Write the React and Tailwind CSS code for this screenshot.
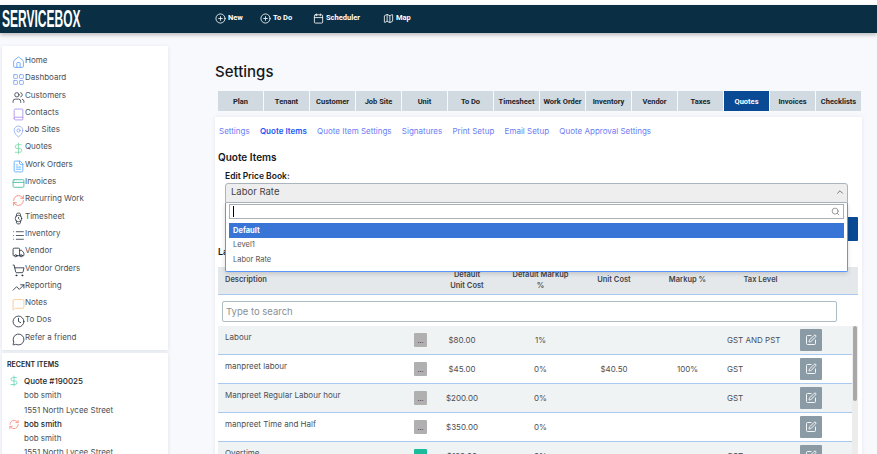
import React from "react";
import { Home, LayoutGrid, Users, Book, MapPin, DollarSign, FileText, CreditCard, RefreshCw, Watch, List, Truck, ShoppingCart, TrendingUp, MessageSquare, Clock, MessageCircle, CirclePlus, Calendar, Map as MapIcon, SquarePen, Search, ChevronUp } from "lucide-react";

const menu = [
  ["Home", Home, "text-[#5b9df5]"],
  ["Dashboard", LayoutGrid, "text-[#7aa0f0]"],
  ["Customers", Users, "text-[#333a45]"],
  ["Contacts", Book, "text-[#a98be8]"],
  ["Job Sites", MapPin, "text-[#8ea8f0]"],
  ["Quotes", DollarSign, "text-[#7dd8a8]"],
  ["Work Orders", FileText, "text-[#4da6ff]"],
  ["Invoices", CreditCard, "text-[#35b89a]"],
  ["Recurring Work", RefreshCw, "text-[#f87c6c]"],
  ["Timesheet", Watch, "text-[#333a45]"],
  ["Inventory", List, "text-[#333a45]"],
  ["Vendor", Truck, "text-[#1f2937]"],
  ["Vendor Orders", ShoppingCart, "text-[#1f2937]"],
  ["Reporting", TrendingUp, "text-[#1f2937]"],
  ["Notes", MessageSquare, "text-[#f9c37a]"],
  ["To Dos", Clock, "text-[#1f2937]"],
  ["Refer a friend", MessageCircle, "text-[#1f2937]"],
];

const tabs = ["Plan", "Tenant", "Customer", "Job Site", "Unit", "To Do", "Timesheet", "Work Order", "Inventory", "Vendor", "Taxes", "Quotes", "Invoices", "Checklists"];
const sub = ["Settings", "Quote Items", "Quote Item Settings", "Signatures", "Print Setup", "Email Setup", "Quote Approval Settings"];

const rows = [
  ["Labour", "$80.00", "1%", "", "", "GST AND PST", false],
  ["manpreet labour", "$45.00", "0%", "$40.50", "100%", "GST", false],
  ["Manpreet Regular Labour hour", "$200.00", "0%", "", "", "GST", false],
  ["manpreet Time and Half", "$350.00", "0%", "", "", "", false],
  ["Overtime", "$120.00", "0%", "", "", "GST", true],
];

function NavItem({ icon: Icon, label, className }) {
  return (
    <div className={"flex items-center gap-[2px] " + className}>
      <Icon size={11} strokeWidth={1.8} />
      <span className="mb-[1px]">{label}</span>
    </div>
  );
}

export default function App() {
  return (
    <div className="h-[454px] w-[877px] overflow-hidden bg-[#f8f9fc] font-['Inter','Liberation_Sans',sans-serif] text-[8px] text-[#4a4f57]">
      <div className="h-[5px] bg-white" />
      <header className="relative z-10 flex h-[28px] items-center bg-[#0a2f44] text-white shadow-[0_2px_4px_rgba(0,0,0,0.25)]">
        <div className="w-[215px] pl-[2px]">
          <span className="inline-block origin-left scale-x-[0.5] font-['Liberation_Sans',sans-serif] text-[24px] leading-none font-bold whitespace-nowrap">SERVICEBOX</span>
        </div>
        <div className="mb-[1px] flex items-center font-['Roboto',sans-serif] text-[7.5px] font-bold">
          <NavItem icon={CirclePlus} label="New" className="w-[45px]" />
          <NavItem icon={CirclePlus} label="To Do" className="w-[53px]" />
          <NavItem icon={Calendar} label="Scheduler" className="w-[70px]" />
          <NavItem icon={MapIcon} label="Map" className="" />
        </div>
      </header>

      <div className="flex">
        <aside className="ml-[2px] w-[166px] shrink-0">
          <nav className="mt-[13px] h-[304px] bg-white pt-[7px] pl-[10px] shadow-[0_1px_4px_rgba(120,130,170,0.2)]">
            {menu.map(([label, Icon, color]) => (
              <div key={label} className="flex h-[17.3px] items-start">
                <Icon size={13} strokeWidth={1.5} className={"mt-[3px] w-[13px] shrink-0 " + color} />
                <span className="text-[8px] leading-[14px] whitespace-nowrap">{label}</span>
              </div>
            ))}
          </nav>
          <section className="mt-[3px] h-[110px] bg-white pt-[7px] pl-[5px] shadow-[0_1px_4px_rgba(120,130,170,0.2)]">
            <div className="text-[7px] leading-[10px] font-semibold text-[#22262b]">RECENT ITEMS</div>
            <div className="mt-[4px] leading-[14.3px] text-[#4a4f57]">
              <div className="flex items-center text-[#22262b]">
                <DollarSign size={12} strokeWidth={1.6} className="w-[17px] pr-[3px] text-[#5fd8b8]" />
                <span className="font-medium">Quote #190025</span>
              </div>
              <div className="pl-[17px]">bob smith</div>
              <div className="pl-[17px]">1551 North Lycee Street</div>
              <div className="flex items-center text-[#22262b]">
                <RefreshCw size={11} strokeWidth={1.6} className="w-[17px] pr-[3px] text-[#f87c6c]" />
                <span className="font-medium">bob smith</span>
              </div>
              <div className="pl-[17px]">bob smith</div>
              <div className="pl-[17px]">1551 North Lycee Street</div>
            </div>
          </section>
        </aside>

        <main className="ml-[47px] w-[647px] shrink-0">
          <h1 className="mt-[29px] text-[15px] leading-[20px] font-medium text-[#15181c]">Settings</h1>
          <div className="mt-[9px] ml-[3px] flex font-['Roboto',sans-serif] text-[7.5px] font-bold text-[#20252b]">
            {tabs.map((t) => (
              <div key={t} className={"mr-[1px] flex h-[20px] w-[45px] items-center justify-center pt-[1px] whitespace-nowrap " + (t === "Quotes" ? "bg-[#0a4a94] text-white" : "bg-[#d2dae1]")}>{t}</div>
            ))}
          </div>

          <div className="mt-[6px] h-[340px] bg-white shadow-[0_0_4px_rgba(120,130,170,0.15)]">
            <div className="flex gap-[10.3px] pt-[8px] pl-[4px] text-[8px] leading-[12px] text-[#6b7df5]">
              {sub.map((s) => (
                <span key={s} className={s === "Quote Items" ? "font-semibold text-[#1a56f0]" : ""}>{s}</span>
              ))}
            </div>
            <div className="mt-[13px] pl-[3px] text-[10px] leading-[14px] font-semibold text-[#15181c]">Quote Items</div>
            <div className="mt-[6px] pl-[10px] text-[8.5px] leading-[12px] font-semibold text-[#15181c]">Edit Price Book:</div>

            <div className="relative z-20 mt-[1px] ml-[10px] w-[623px]">
              <div className="flex h-[20px] items-center justify-between rounded-t-[3px] border border-[#aab4bd] bg-[#eeeeee] pr-[2px] pb-[2px] pl-[5px] text-[9.5px] text-[#444]">
                <span>Labor Rate</span>
                <ChevronUp size={10} strokeWidth={2.4} className="text-[#777]" />
              </div>
              <div className="absolute top-full left-0 h-[69px] w-full rounded-b-[2px] border border-t-0 border-[#5897fb] bg-white px-[3px] pt-[1px] shadow-[0_2px_4px_rgba(0,0,0,0.15)]">
                <div className="flex h-[15px] items-center justify-between border border-[#aab0b6] pr-[3px] pl-[3px]">
                  <span className="h-[11px] w-[1px] bg-black" />
                  <Search size={9} strokeWidth={2.2} className="text-[#888]" />
                </div>
                <div className="mt-[4px] flex h-[15px] items-center bg-[#3875d7] pl-[4px] text-[7.5px] font-bold text-white">Default</div>
                <div className="flex h-[15px] items-center pb-[2px] pl-[4px] text-[7.5px] text-[#555]">Level1</div>
                <div className="flex h-[15px] items-center pb-[2px] pl-[4px] text-[7.5px] text-[#555]">Labor Rate</div>
              </div>
            </div>

            <div className="mt-[14px] flex justify-end pr-[4px]">
              <div className="h-[24px] w-[60px] rounded-[1px] bg-[#0a4a94]" />
            </div>
            <div className="mt-[5px] mb-[9px] pl-[3px] text-[9px] leading-[12px] font-semibold text-[#15181c]">Labor Rate</div>

            <div className="ml-[3px] w-[640px]">
              <div className="flex h-[28px] items-center border-b border-[#a9c9f0] bg-[#e5e8eb] pb-[2px] text-center text-[7.5px] leading-[11px] font-semibold text-[#40454c]">
                <div className="w-[212px] pl-[7px] text-left">Description</div>
                <div className="w-[74px]">Default<br />Unit Cost</div>
                <div className="w-[73px]">Default Markup<br />%</div>
                <div className="w-[74px]">Unit Cost</div>
                <div className="w-[73px]">Markup %</div>
                <div className="w-[73px]">Tax Level</div>
              </div>
              <div className="pt-[6px] pr-[21px] pb-[4px] pl-[4px]">
                <input readOnly placeholder="Type to search" className="h-[21px] w-full rounded-[2px] border border-[#aebcc6] bg-white pl-[3px] text-[9.5px] placeholder:text-[#8a8f95]" />
              </div>
              <div className="relative h-[200px] overflow-hidden pr-[6px]">
                {rows.map(([d, uc, mk, c2, m2, tax, green], i) => (
                  <div key={d} className={"flex h-[29px] items-center border-b border-[#a9c9f0] text-[8px] " + (i % 2 === 0 ? "bg-[#f0f3f4]" : "bg-white")}>
                    <div className="mb-[6px] w-[186px] pl-[7px] whitespace-nowrap">{d}</div>
                    <div className="w-[33px] pl-[10px]">
                      <div className={"flex h-[14px] w-[13px] items-center justify-center rounded-[1px] text-[7px] leading-none text-[#333] " + (green ? "bg-[#1abc9c]" : "bg-[#b0b0b0]")}>...</div>
                    </div>
                    <div className="mb-[1px] w-[50px] text-center">{uc}</div>
                    <div className="mb-[1px] ml-[17px] w-[73px] text-center">{mk}</div>
                    <div className="mb-[1px] w-[74px] text-center">{c2}</div>
                    <div className="mb-[1px] w-[73px] text-center">{m2}</div>
                    <div className="mb-[1px] w-[76px] pl-[3px] whitespace-nowrap">{tax}</div>
                    <div className="flex h-[22px] w-[22px] items-center justify-center rounded-[1px] bg-[#8a9ba5] text-white">
                      <SquarePen size={12} strokeWidth={1.8} />
                    </div>
                  </div>
                ))}
                <div className="absolute top-0 right-0 h-full w-[6px] bg-[#ececec]">
                  <div className="mx-auto h-[75px] w-[4px] rounded-[2px] bg-[#a8a8a8]" />
                </div>
              </div>
            </div>
          </div>
        </main>
      </div>
    </div>
  );
}
